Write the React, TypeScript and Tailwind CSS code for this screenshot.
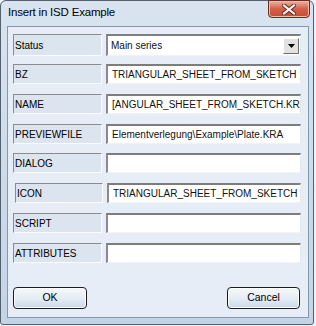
import React from 'react';

const rows = [
  { label: 'BZ', value: 'TRIANGULAR_SHEET_FROM_SKETCH', mt: 'mt-[8px]', shift: false },
  { label: 'NAME', value: '[ANGULAR_SHEET_FROM_SKETCH.KRA', mt: 'mt-[10px]', shift: false },
  { label: 'PREVIEWFILE', value: 'Elementverlegung\\Example\\Plate.KRA', mt: 'mt-[10px]', shift: false },
  { label: 'DIALOG', value: '', mt: 'mt-[9px]', shift: false },
  { label: 'ICON', value: 'TRIANGULAR_SHEET_FROM_SKETCH', mt: 'mt-[10px]', shift: true },
  { label: 'SCRIPT', value: '', mt: 'mt-[10px]', shift: false },
  { label: 'ATTRIBUTES', value: '', mt: 'mt-[10px]', shift: false },
];

const labelBox =
  'flex items-center h-full bg-[#dce4ef] border-t border-l border-t-[#8c8c8c] border-l-[#8c8c8c] border-b border-r border-b-[#fbfcfe] border-r-[#fbfcfe] pl-[1px] text-black';

const inputBox =
  'flex items-center h-full bg-white border-t-2 border-l-2 border-t-[#7d7d7d] border-l-[#8a8a8a] border-b border-r border-b-[#f2f2f2] border-r-[#e8e8e8] pl-[4px] overflow-hidden whitespace-nowrap text-[#111]';

const CloseGlyph = () => (
  <svg width="14" height="11" viewBox="0 0 14 11">
    <path d="M2 1.5 L12 9.5 M12 1.5 L2 9.5" stroke="#5a2a24" strokeWidth="4" strokeLinecap="square" />
    <path d="M2 1.5 L12 9.5 M12 1.5 L2 9.5" stroke="#f4f4f4" strokeWidth="2.2" strokeLinecap="square" />
  </svg>
);

const DlgButton = ({ text, w }: { text: string; w: string }) => (
  <button
    className={`${w} h-[22px] rounded-[4px] border border-[#1c1c1c] bg-gradient-to-b from-[#f5f7fa] via-[#e7edf5] to-[#cad8ea] shadow-[inset_0_0_0_1px_#fbfdff] text-[10.5px] text-black`}
  >
    {text}
  </button>
);

export default function App() {
  return (
    <div className="w-[316px] h-[326px] bg-[#eef1f5] font-['Liberation_Sans',Arial,sans-serif]">
      <div className="w-[314px] h-[325px] flex flex-col border border-[#55606e] rounded-t-[6px] rounded-b-[3px] bg-gradient-to-b from-[#d9e4f0] via-[#cddbeb] to-[#c4d4e7]">
        <div className="h-[25px] flex items-start justify-between">
          <span className="pl-[7px] pt-[6px] text-[11.5px] tracking-[-0.2px] text-black leading-none">
            Insert in ISD Example
          </span>
          <div className="-mt-[1px] mr-[3px] w-[42px] h-[18px] flex items-center justify-center rounded-b-[4px] border border-[#6b2b22] bg-gradient-to-b from-[#eab0a2] via-[#d45f47] to-[#c84a33] shadow-[inset_0_0_0_1px_#f0b9a9]">
            <CloseGlyph />
          </div>
        </div>

        <div className="ml-[6px] mr-[4px] h-[292px] border border-[#8497ad] bg-[#e7edf6] flex flex-col text-[10px]">
          <div className="flex h-[22px] mt-[7px] ml-[5px] mr-[7px] gap-[4px]">
            <div className={`${labelBox} w-[89px] h-[21px]`}>Status</div>
            <div className="flex-1 flex items-center h-full bg-white border-t-2 border-l-2 border-t-[#7d7d7d] border-l-[#8a8a8a] border-b border-r border-b-[#f2f2f2] border-r-[#e8e8e8] pl-[3px] text-[#111]">
              <span className="flex-1">Main series</span>
              <div className="w-[16px] h-[16px] mr-[1px] flex items-center justify-center bg-[#e2e2e2] border-t border-l border-t-[#fdfdfd] border-l-[#fdfdfd] border-b border-r border-b-[#6e6e6e] border-r-[#6e6e6e]">
                <svg width="7" height="4" viewBox="0 0 7 4">
                  <path d="M0 0 H7 L3.5 4 Z" fill="#000" />
                </svg>
              </div>
            </div>
          </div>

          {rows.map((r) => (
            <div
              key={r.label}
              className={`flex h-[20px] ${r.mt} mr-[7px] gap-[4px] ${r.shift ? 'ml-[7px]' : 'ml-[5px]'}`}
            >
              <div className={`${labelBox} ${r.shift ? 'w-[88px]' : 'w-[89px]'}`}>{r.label}</div>
              <div className={`${inputBox} flex-1`}>{r.value}</div>
            </div>
          ))}

          <div className="mt-auto mb-[8px] ml-[5px] mr-[8px] flex justify-between">
            <DlgButton text="OK" w="w-[74px]" />
            <DlgButton text="Cancel" w="w-[73px]" />
          </div>
        </div>
      </div>
    </div>
  );
}
